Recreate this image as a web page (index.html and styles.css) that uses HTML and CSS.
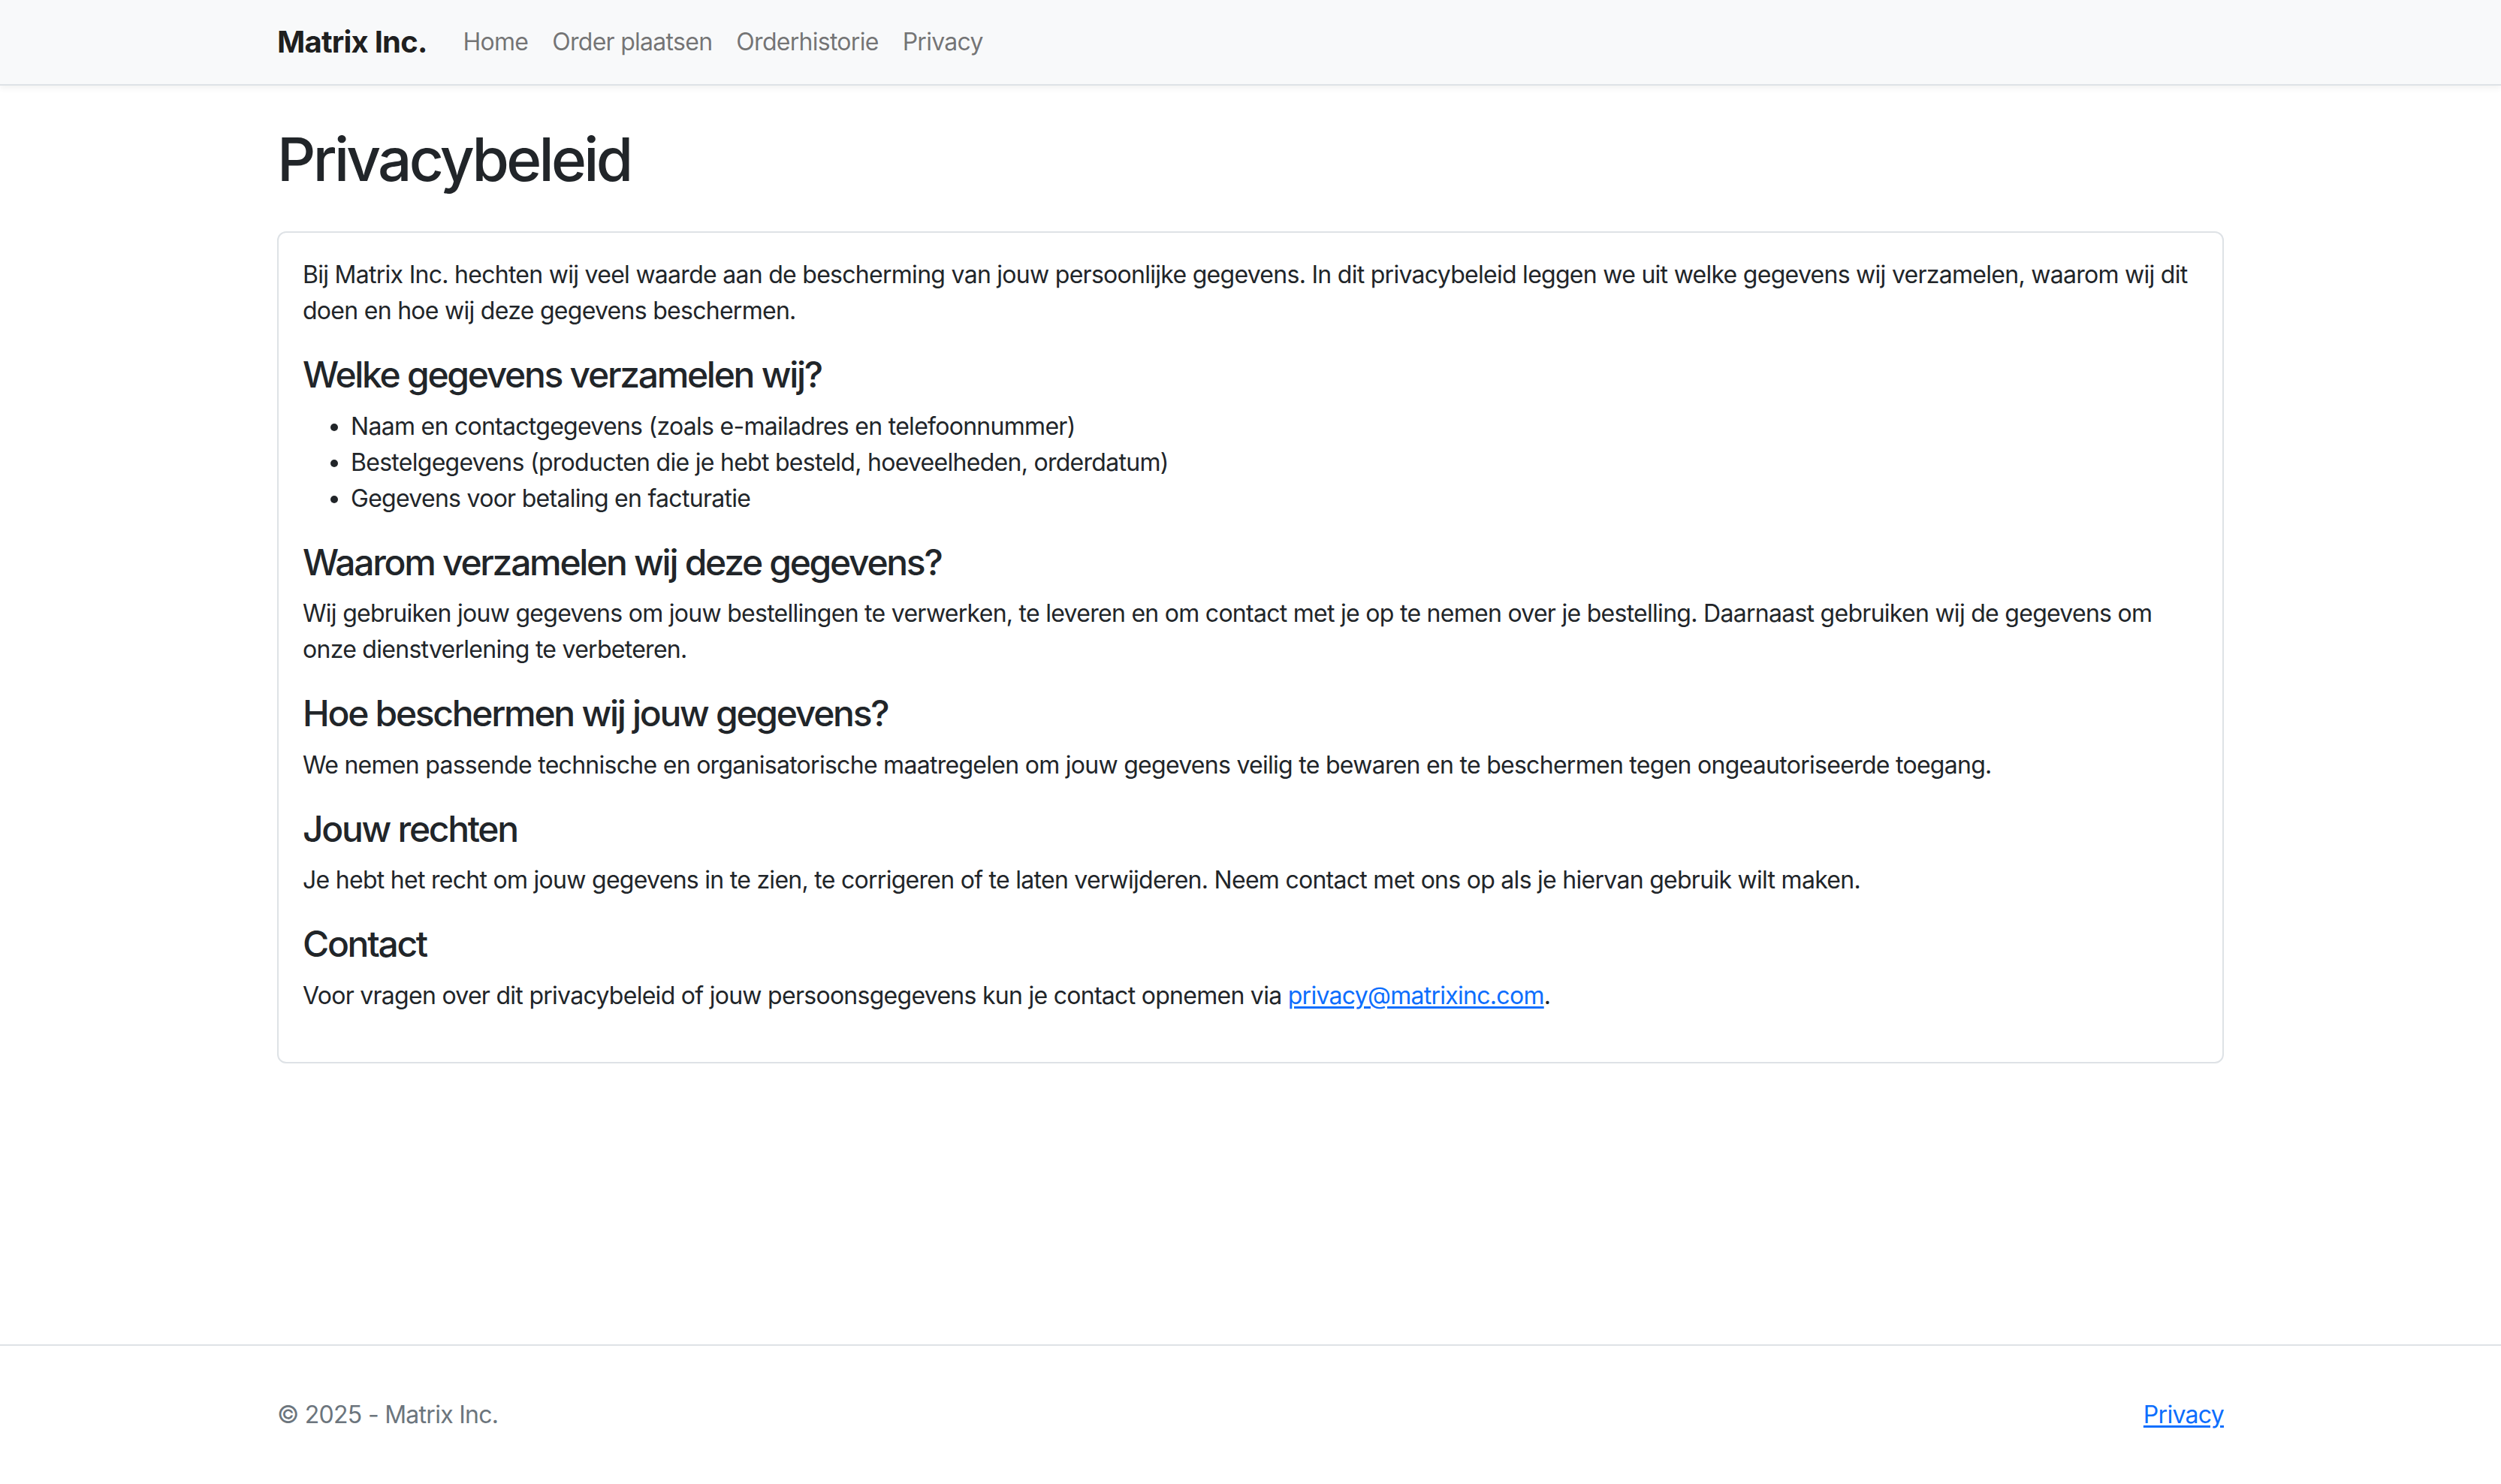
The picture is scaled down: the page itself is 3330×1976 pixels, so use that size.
FILE: index.html
```html
<!DOCTYPE html>
<html lang="nl">
<head>
<meta charset="utf-8">
<title>Privacybeleid - Matrix Inc.</title>
<link rel="stylesheet" href="styles.css">
</head>
<body>
<header class="navbar">
  <div class="container nav-inner">
    <a class="brand" href="#">Matrix Inc.</a>
    <nav class="nav-links">
      <a class="nav-link" href="#">Home</a>
      <a class="nav-link" href="#">Order plaatsen</a>
      <a class="nav-link" href="#">Orderhistorie</a>
      <a class="nav-link" href="#">Privacy</a>
    </nav>
  </div>
</header>
<main class="container main">
  <h1 class="title">Privacybeleid</h1>
  <section class="card">
    <p>Bij Matrix Inc. hechten wij veel waarde aan de bescherming van jouw persoonlijke gegevens. In dit privacybeleid leggen we uit welke gegevens wij verzamelen, waarom wij dit doen en hoe wij deze gegevens beschermen.</p>
    <h4>Welke gegevens verzamelen wij?</h4>
    <ul>
      <li>Naam en contactgegevens (zoals e-mailadres en telefoonnummer)</li>
      <li>Bestelgegevens (producten die je hebt besteld, hoeveelheden, orderdatum)</li>
      <li>Gegevens voor betaling en facturatie</li>
    </ul>
    <h4>Waarom verzamelen wij deze gegevens?</h4>
    <p>Wij gebruiken jouw gegevens om jouw bestellingen te verwerken, te leveren en om contact met je op te nemen over je bestelling. Daarnaast gebruiken wij de gegevens om onze dienstverlening te verbeteren.</p>
    <h4>Hoe beschermen wij jouw gegevens?</h4>
    <p>We nemen passende technische en organisatorische maatregelen om jouw gegevens veilig te bewaren en te beschermen tegen ongeautoriseerde toegang.</p>
    <h4>Jouw rechten</h4>
    <p>Je hebt het recht om jouw gegevens in te zien, te corrigeren of te laten verwijderen. Neem contact met ons op als je hiervan gebruik wilt maken.</p>
    <h4>Contact</h4>
    <p>Voor vragen over dit privacybeleid of jouw persoonsgegevens kun je contact opnemen via <a class="link" href="#">privacy@matrixinc.com</a>.</p>
  </section>
</main>
<footer class="footer">
  <div class="container footer-inner">
    <span class="muted">&copy; 2025 - Matrix Inc.</span>
    <a class="link" href="#">Privacy</a>
  </div>
</footer>
</body>
</html>
```

FILE: styles.css
```css
* { box-sizing: border-box; }
html, body { margin: 0; padding: 0; }
body {
  font-family: Inter, "Noto Sans", Roboto, sans-serif;
  font-size: 32px;
  line-height: 1.5;
  color: #212529;
  background: #fff;
  min-height: 100vh;
  display: flex;
  flex-direction: column;
  letter-spacing: -0.72px;
}
.container {
  width: 100%;
  max-width: 2640px;
  margin: 0 auto;
  padding: 0 24px;
}
.navbar {
  background: #f8f9fa;
  border-bottom: 2px solid #dee2e6;
  box-shadow: 0 4px 8px rgba(0,0,0,0.05);
  padding: 16px 0;
}
.nav-inner {
  display: flex;
  align-items: center;
}
.brand {
  font-size: 40px;
  font-weight: 700;
  color: rgba(0,0,0,0.9);
  text-decoration: none;
  padding: 10px 0;
  margin-right: 32px;
  line-height: 1.5;
  letter-spacing: -0.8px;
}
.nav-links { display: flex; }
.nav-link {
  color: rgba(0,0,0,0.55);
  text-decoration: none;
  padding: 16px;
  line-height: 1.5;
}
.main { flex: 1 0 auto; padding-top: 50px; }
.title {
  font-size: 80px;
  font-weight: 500;
  line-height: 1.2;
  margin: 0 0 48px;
  letter-spacing: -3.7px;
}
.card {
  border: 2px solid #dee2e6;
  border-radius: 12px;
  padding: 32px;
  margin-bottom: 48px;
}
.card p { margin: 0 0 32px; }
.card h4 {
  font-size: 48px;
  font-weight: 500;
  line-height: 1.2;
  margin: 0 0 16px;
  letter-spacing: -2.3px;
}
.card ul { margin: 0 0 32px; padding-left: 64px; }
.link { color: #0d6efd; text-decoration: underline; text-underline-offset: 3px; }
.footer {
  border-top: 2px solid #dee2e6;
  height: 186px;
  display: flex;
  align-items: center;
}
.footer-inner {
  display: flex;
  justify-content: space-between;
  align-items: center;
}
.muted { color: #6c757d; }
```
